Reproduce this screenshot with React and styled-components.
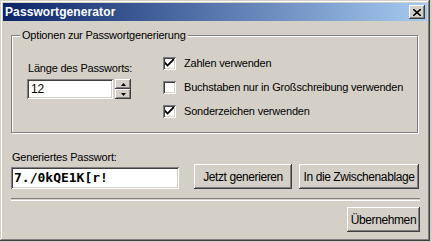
import React from 'react';
import styled, { createGlobalStyle } from 'styled-components';

const Global = createGlobalStyle`
  html, body {
    margin: 0;
    padding: 0;
    background: #d4d0c8;
  }
  body {
    font-family: "Liberation Sans", Arial, sans-serif;
    font-size: 11px;
    letter-spacing: -0.2px;
    color: #000;
  }
`;

const raised = `
  box-shadow:
    inset -1px -1px #404040,
    inset 1px 1px #ffffff,
    inset -2px -2px #808080,
    inset 2px 2px #d4d0c8;
`;

const sunken = `
  box-shadow:
    inset 1px 1px #808080,
    inset -1px -1px #ffffff,
    inset 2px 2px #404040,
    inset -2px -2px #d4d0c8;
`;

const Window = styled.div`
  width: 430px;
  height: 241px;
  box-sizing: border-box;
  padding: 3px;
  background: #d4d0c8;
  display: flex;
  flex-direction: column;
  box-shadow:
    inset -1px -1px #404040,
    inset 1px 1px #d4d0c8,
    inset -2px -2px #808080,
    inset 2px 2px #ffffff;
`;

const TitleBar = styled.div`
  height: 18px;
  display: flex;
  align-items: center;
  justify-content: space-between;
  padding: 0 2px 0 2px;
  background: linear-gradient(to right, #0a246a, #a6caf0);
`;

const Title = styled.span`
  color: #fff;
  font-weight: bold;
  font-size: 12px;
  letter-spacing: 0.1px;
`;

const CloseButton = styled.button`
  width: 16px;
  height: 14px;
  padding: 0;
  border: none;
  background: #d4d0c8;
  display: flex;
  align-items: center;
  justify-content: center;
  ${raised}
`;

const Body = styled.div`
  flex: 1;
  display: flex;
  flex-direction: column;
  padding: 8px 7px 0 8px;
`;

const GroupBox = styled.fieldset`
  margin: 0 2px 0 0;
  padding: 9px 0 9px 15px;
  border: 1px solid #808080;
  box-shadow: inset 1px 1px #fff, 1px 1px #fff;
  min-width: 0;
`;

const Legend = styled.legend`
  margin-left: -7px;
  padding: 0 2px;
  background: #d4d0c8;
  position: relative;
  line-height: 13px;
`;

const Options = styled.div`
  display: flex;
  gap: 32px;
  white-space: nowrap;
`;

const LengthField = styled.div`
  width: 104px;
  display: flex;
  flex-direction: column;
  gap: 4px;
  margin-top: 11px;
`;

const Label = styled.label`
  line-height: 13px;
  white-space: nowrap;
  padding-left: ${p => p.$indent || 0}px;
`;

const SpinBox = styled.div`
  display: flex;
  gap: 2px;
`;

const SpinInput = styled.div`
  width: 88px;
  height: 20px;
  box-sizing: border-box;
  background: #fff;
  padding: 3px 4px;
  font-size: 12px;
  line-height: 14px;
  ${sunken}
`;

const SpinButtons = styled.div`
  display: flex;
  flex-direction: column;
  width: 16px;
  height: 20px;
`;

const SpinButton = styled.div`
  flex: 1;
  display: flex;
  align-items: center;
  justify-content: center;
  background: #d4d0c8;
  ${raised}
`;

const CheckList = styled.div`
  display: flex;
  flex-direction: column;
`;

const CheckRow = styled.label`
  height: 24px;
  display: flex;
  align-items: center;
  gap: 8px;
`;

const CheckBox = styled.span`
  width: 13px;
  height: 13px;
  box-sizing: border-box;
  background: #fff;
  display: flex;
  align-items: center;
  justify-content: center;
  ${sunken}
`;

const OutputSection = styled.div`
  display: flex;
  align-items: flex-end;
  margin-top: 18px;
  padding-right: 1px;
`;

const OutputField = styled.div`
  display: flex;
  flex-direction: column;
  gap: 3px;
  margin-right: 15px;
`;

const PasswordBox = styled.div`
  width: 168px;
  height: 22px;
  box-sizing: border-box;
  background: #fff;
  padding: 3px 3px;
  font-family: "DejaVu Sans Mono", "Liberation Mono", monospace;
  font-weight: bold;
  font-size: 13px;
  letter-spacing: 0;
  line-height: 16px;
  ${sunken}
`;

const Button = styled.button`
  height: 25px;
  width: ${p => p.$width}px;
  margin-left: ${p => p.$gap || 0}px;
  padding: 0;
  border: none;
  background: #d4d0c8;
  font-family: "Liberation Sans", Arial, sans-serif;
  font-size: 12px;
  letter-spacing: -0.4px;
  color: #000;
  white-space: nowrap;
  ${raised}
`;

const Separator = styled.div`
  margin: 9px 0 0 0;
  height: 1px;
  border-top: 1px solid #808080;
  border-bottom: 1px solid #fff;
`;

const Footer = styled.div`
  display: flex;
  justify-content: flex-end;
  margin-top: 6px;
`;

const Check = () => (
  <svg width="9" height="9" viewBox="0 0 7 7">
    <path d="M0 2 L0 4 L2 6 L7 1 L7 -1 L2 4 Z" fill="#000" />
  </svg>
);

const options = [
  { label: 'Zahlen verwenden', checked: true },
  { label: 'Buchstaben nur in Großschreibung verwenden', checked: false },
  { label: 'Sonderzeichen verwenden', checked: true },
];

export default function App() {
  return (
    <>
      <Global />
      <Window>
        <TitleBar>
          <Title>Passwortgenerator</Title>
          <CloseButton>
            <svg width="8" height="7" viewBox="0 0 8 7">
              <path d="M0 0 L8 7 M8 0 L0 7" stroke="#000" strokeWidth="1.6" />
            </svg>
          </CloseButton>
        </TitleBar>
        <Body>
          <GroupBox>
            <Legend>Optionen zur Passwortgenerierung</Legend>
            <Options>
              <LengthField>
                <Label $indent={1}>Länge des Passworts:</Label>
                <SpinBox>
                  <SpinInput>12</SpinInput>
                  <SpinButtons>
                    <SpinButton>
                      <svg width="5" height="3" viewBox="0 0 5 3"><path d="M2.5 0 L5 3 L0 3 Z" fill="#000" /></svg>
                    </SpinButton>
                    <SpinButton>
                      <svg width="5" height="3" viewBox="0 0 5 3"><path d="M0 0 L5 0 L2.5 3 Z" fill="#000" /></svg>
                    </SpinButton>
                  </SpinButtons>
                </SpinBox>
              </LengthField>
              <CheckList>
                {options.map(o => (
                  <CheckRow key={o.label}>
                    <CheckBox>{o.checked && <Check />}</CheckBox>
                    {o.label}
                  </CheckRow>
                ))}
              </CheckList>
            </Options>
          </GroupBox>
          <OutputSection>
            <OutputField>
              <Label $indent={1}>Generiertes Passwort:</Label>
              <PasswordBox>7./0kQE1K[r!</PasswordBox>
            </OutputField>
            <Button $width={98}>Jetzt generieren</Button>
            <Button $width={120} $gap={7}>In die Zwischenablage</Button>
          </OutputSection>
          <Separator />
          <Footer>
            <Button $width={73}>Übernehmen</Button>
          </Footer>
        </Body>
      </Window>
    </>
  );
}
